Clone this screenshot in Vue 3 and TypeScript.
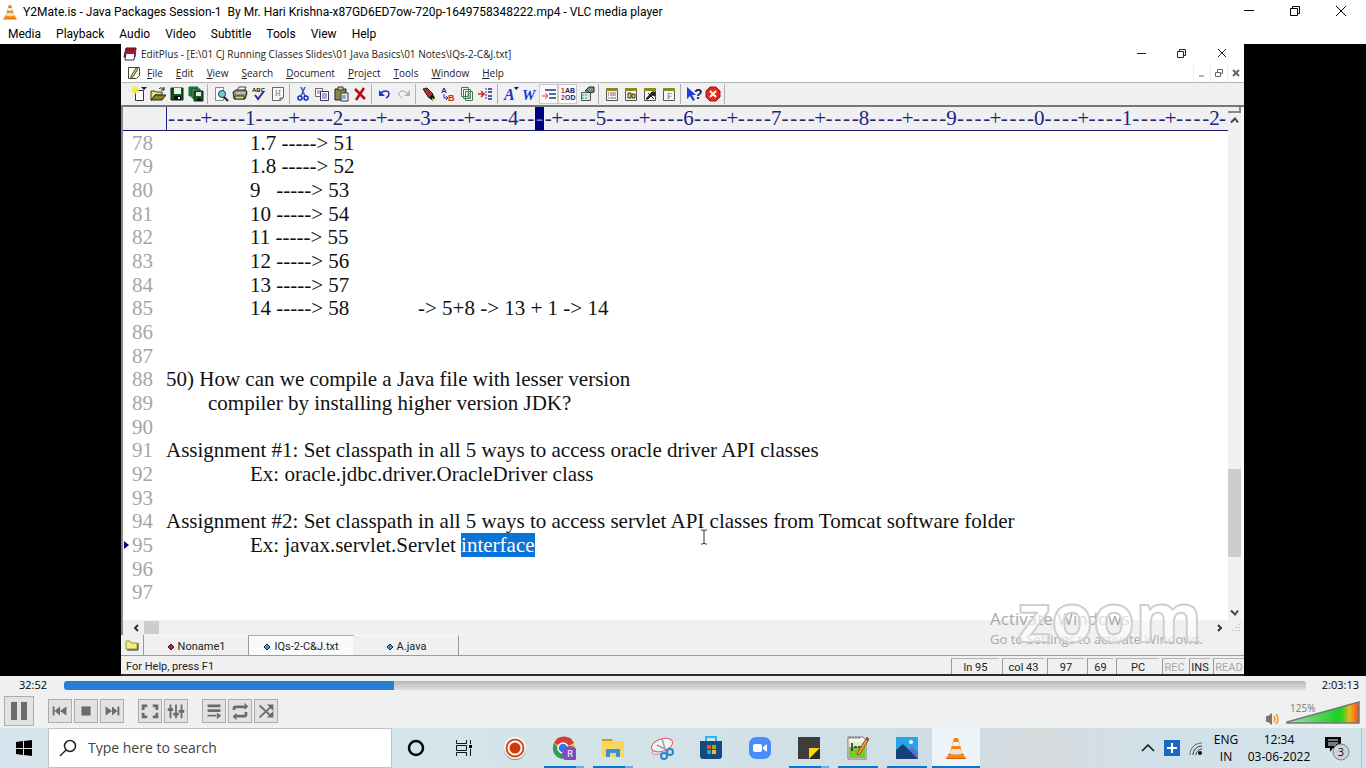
<script setup lang="ts">
interface Line { n: number; text: string; selected?: string; current?: boolean }
interface Task { name: string; body: string; state?: 'run' | 'multi' | 'active' }

const playerMenu: string[] = ['Media', 'Playback', 'Audio', 'Video', 'Subtitle', 'Tools', 'View', 'Help']
const editorMenu: string[] = ['File', 'Edit', 'View', 'Search', 'Document', 'Project', 'Tools', 'Window', 'Help']

const lines: Line[] = [
  { n: 78, text: '\t\t1.7 -----> 51' },
  { n: 79, text: '\t\t1.8 -----> 52' },
  { n: 80, text: '\t\t9   -----> 53' },
  { n: 81, text: '\t\t10 -----> 54' },
  { n: 82, text: '\t\t11 -----> 55' },
  { n: 83, text: '\t\t12 -----> 56' },
  { n: 84, text: '\t\t13 -----> 57' },
  { n: 85, text: '\t\t14 -----> 58\t\t-> 5+8 -> 13 + 1 -> 14' },
  { n: 86, text: '' },
  { n: 87, text: '' },
  { n: 88, text: '50) How can we compile a Java file with lesser version' },
  { n: 89, text: '\tcompiler by installing higher version JDK?' },
  { n: 90, text: '' },
  { n: 91, text: 'Assignment #1: Set classpath in all 5 ways to access oracle driver API classes' },
  { n: 92, text: '\t\tEx: oracle.jdbc.driver.OracleDriver class' },
  { n: 93, text: '' },
  { n: 94, text: 'Assignment #2: Set classpath in all 5 ways to access servlet API classes from Tomcat software folder' },
  { n: 95, text: '\t\tEx: javax.servlet.Servlet ', selected: 'interface', current: true },
  { n: 96, text: '' },
  { n: 97, text: '' },
]

const caretColumn = 42
const ruler: string[] = Array.from({ length: 120 }, (_, i) => {
  if (i % 10 === 9) return String(((i + 1) / 10) % 10)
  return i % 10 === 4 ? '+' : '-'
})

const sheet = '<path d="M2.5 2.5h11v12h-11z" fill="#f4f4f4" stroke="#555"/><path d="M2 2h12v3H2z" fill="#8a8a20"/>'
const toolGroups: { name: string; body: string; on?: boolean }[][] = [
  [
    { name: 'New', body: '<path d="M4.500 4.500h8v10h-8z" fill="#fff" stroke="#333"/><path d="M4 0v8M0 4h8M1 1l6 6M7 1L1 7" stroke="#f5ee3a" stroke-width="1.500"/><path d="M10 1h6l-3 3z" fill="#111a60"/>' },
    { name: 'Open', body: '<path d="M1 5h4l1 1h6v3H5l-3 5H1z" fill="#e9e070" stroke="#333"/><path d="M5 9h11l-4 5H1z" fill="#8a8420" stroke="#222"/><path d="M9 3c2-2 4-1 5 1M14 1v3h-3" fill="none" stroke="#111"/>' },
    { name: 'Save', body: '<path d="M2 2h12v12H2z" fill="#0c5c18" stroke="#062b0a"/><path d="M5 2h7v6H5z" fill="#eef5ee"/><path d="M5 10h7v4H5z" fill="#111"/><path d="M9 11h2v2H9z" fill="#fff"/>' },
    { name: 'Save all', body: '<path d="M1 1h9v9H1z" fill="#1d7b2b" stroke="#174"/><path d="M4 3h8v9H4z" fill="#58a963" stroke="#153"/><path d="M6 5h9v10H6z" fill="#14611f" stroke="#052b0a"/><path d="M8 6h5v4H8z" fill="#dfe9df"/><path d="M9 12h4v3H9z" fill="#111"/>' },
  ],
  [
    { name: 'Print preview', body: '<path d="M2.500 1.500h8v13h-8z" fill="#fff" stroke="#888"/><circle cx="9" cy="8" r="3.500" fill="#73cbdc" stroke="#236"/><path d="M11 11l4 4" stroke="#123" stroke-width="2"/>' },
    { name: 'Print', body: '<path d="M5 5l2-4h7l-2 4" fill="#fff" stroke="#444"/><path d="M1 6l3-2h10l1 3-2 6H2z" fill="#8c9270" stroke="#222"/><path d="M3 10h9v3H3z" fill="#d8dc60" stroke="#333"/><path d="M4 7h9" stroke="#efefe0"/>' },
    { name: 'Spelling', body: '<text x="1" y="6" font-size="6" font-weight="700" font-family="Liberation Sans" fill="#111">ABC</text><path d="M4 9l3 4 6-8" fill="none" stroke="#2b2b90" stroke-width="2"/>' },
    { name: 'HTML', body: '<path d="M2.500 1.500h11v10l-3 3h-8z" fill="#f8f8f8" stroke="#666"/><path d="M13 12h-3v3" fill="none" stroke="#555"/><text x="5" y="10" font-size="8" font-family="Liberation Serif" fill="#777">H</text>' },
  ],
  [
    { name: 'Cut', body: '<path d="M6 1l4 9M10 1L6 10" stroke="#335ad2" stroke-width="1.500"/><circle cx="5" cy="12" r="2" fill="none" stroke="#1727c8" stroke-width="1.500"/><circle cx="11" cy="12" r="2" fill="none" stroke="#1727c8" stroke-width="1.500"/>' },
    { name: 'Copy', body: '<path d="M1.500 2.500h7v8h-7z" fill="#fff" stroke="#667"/><path d="M3 5h4M3 7h4" stroke="#77a"/><path d="M6.500 5.500h8v9h-8z" fill="#fff" stroke="#336"/><path d="M8 8h5M8 10h5M8 12h5" stroke="#559"/>' },
    { name: 'Paste', body: '<path d="M2 3h11v11H2z" fill="#8a8540" stroke="#222"/><path d="M5 1h5v3H5z" fill="#d7d27a" stroke="#333"/><path d="M8 7h7v8H8z" fill="#e7f2ff" stroke="#334"/><path d="M9 10h4M9 12h4" stroke="#36a"/>' },
    { name: 'Delete', body: '<path d="M3 3l10 10M12 2L4 14" stroke="#b80d10" stroke-width="2.500"/>' },
  ],
  [
    { name: 'Undo', body: '<path d="M3 8c3-4 9-4 9 0 0 2-1 3-3 4" fill="none" stroke="#2036cf" stroke-width="1.500"/><path d="M2 4v6h6z" fill="#2036cf"/>' },
    { name: 'Redo', body: '<path d="M12 8c-3-4-9-4-9 0 0 2 1 3 3 4" fill="none" stroke="#aaa"/><path d="M14 4v6H8z" fill="#b4b4b4"/>' },
  ],
  [
    { name: 'Find', body: '<path d="M2 3l4-1 6 6-4 4z" fill="#b13126" stroke="#311"/><path d="M8 12l4-4 2 4-2 3z" fill="#1d1411"/><path d="M11 12l4 2-3 2z" fill="#f6e765"/>' },
    { name: 'Replace', body: '<text x="1" y="7" font-size="8" font-weight="700" font-family="Liberation Sans" fill="#28288c">A</text><text x="8" y="15" font-size="9" font-weight="700" font-family="Liberation Sans" fill="#d22">B</text><path d="M4 8v4h4M6 10l2 2-2 2" fill="none" stroke="#339"/>' },
    { name: 'Find in files', body: '<path d="M2.500 1.500h7v9h-7zM4.500 3.500h7v9h-7zM6.500 5.500h7v9h-7z" fill="#f8fbf8" stroke="#475"/><path d="M8 8h4M8 10h4M8 12h4" stroke="#686"/>' },
    { name: 'Go to line', body: '<path d="M0 8h5M3 5l3 3-3 3" fill="none" stroke="#d91f1f" stroke-width="1.500"/><path d="M8 2v12" stroke="#339" stroke-dasharray="2 1"/><path d="M10 3h4M10 6h4M10 10h4M10 13h4" stroke="#228" stroke-width="1.500"/>' },
  ],
  [
    { name: 'Font', body: '<text x="1" y="14" font-size="16" font-weight="700" font-style="italic" font-family="Liberation Serif" fill="#1d37c9">A</text><path d="M11 1h5l-3 3z" fill="#118"/>' },
    { name: 'Web font', body: '<text x="0" y="14" font-size="15" font-weight="700" font-style="italic" font-family="Liberation Serif" fill="#1d37e0">W</text>' },
    { name: 'Word wrap', on: true, body: '<path d="M4 4h11M8 8h7M8 12h7" stroke="#22328e" stroke-width="1.500"/><path d="M1 10h5M4 7l3 3-3 3" fill="none" stroke="#ed2b2b"/>' },
    { name: 'Line numbers', on: true, body: '<text x="1" y="7" font-size="7" font-weight="700" font-family="Liberation Sans" fill="#d22">1</text><text x="5" y="7" font-size="7" font-weight="700" font-family="Liberation Sans" fill="#227">AB</text><text x="1" y="14" font-size="7" font-weight="700" font-family="Liberation Sans" fill="#d22">2</text><text x="5" y="14" font-size="7" font-weight="700" font-family="Liberation Sans" fill="#227">OD</text>' },
    { name: 'Preferences', body: '<path d="M2.500 6.500h9v8h-9z" fill="#cdf2dc" stroke="#555"/><path d="M3 9h6M3 12h6" stroke="#3a8" stroke-dasharray="2 1"/><path d="M6 5l4-4h5v5l-4 1-2-2z" fill="#7b9580" stroke="#222"/>' },
  ],
  [
    { name: 'Cliptext', body: sheet + '<path d="M4 7h1M4 9h1M4 12h1" stroke="#c33"/><path d="M6 7h6M6 9h6M6 12h6" stroke="#777"/>' },
    { name: 'Directory', body: sheet + '<path d="M5 7h3v5H5zM9 8h3v4H9z" fill="#e3dc3b" stroke="#333"/>' },
    { name: 'Tools', body: sheet + '<path d="M4 13l6-7h3v4l-3-1-4 4zM6 7l6 6" fill="#222" stroke="#222"/>' },
    { name: 'Functions', body: sheet + '<text x="6" y="13" font-size="9" font-family="Liberation Serif" fill="#777">F</text>' },
  ],
  [
    { name: 'Context help', body: '<path d="M1 1v12l3-3 3 5 2-1-3-5h4z" fill="#1f3bd8"/><text x="8" y="13" font-size="14" font-weight="700" font-family="Liberation Sans" fill="#171d66">?</text>' },
    { name: 'Stop', body: '<path d="M5 1h6l4 4v6l-4 4H5l-4-4V5z" fill="#e8281e" stroke="#a11"/><path d="M5 5l6 6M11 5l-6 6" stroke="#fff" stroke-width="2"/>' },
  ],
]

const docTabs = [
  { name: 'Noname1', color: '#d32020' },
  { name: 'IQs-2-C&J.txt', color: '#2d9cf0', active: true },
  { name: 'A.java', color: '#2d9cf0' },
]
const statusCells = [
  { t: 'ln 95', c: 'w48' }, { t: 'col 43', c: 'w43' }, { t: '97', c: 'w38' }, { t: '69', c: 'w27' },
  { t: 'PC', c: 'w44' }, { t: 'REC', c: 'w24 dim' }, { t: 'INS', c: 'w22' }, { t: 'READ', c: 'w30 dim' },
]

const controlGroups: { name: string; body: string }[][] = [
  [
    { name: 'Previous', body: '<path d="M4 7h2v10H4zM12 7v10l-6-5zM19 7v10l-7-5z"/>' },
    { name: 'Stop', body: '<path d="M7 7h10v10H7z"/>' },
    { name: 'Next', body: '<path d="M18 7h2v10h-2zM12 7v10l6-5zM5 7v10l7-5z"/>' },
  ],
  [
    { name: 'Fullscreen', body: '<path d="M3 5h6v3H6v3H3zM15 5h6v6h-3V8h-3zM3 14h3v3h3v3H3zM18 14h3v6h-6v-3h3z"/>' },
    { name: 'Extended settings', body: '<path d="M5 5h2v4h2v3H7v8H5v-8H3V9h2zM11 5h2v9h2v3h-2v3h-2v-3H9v-3h2zM17 5h2v6h2v3h-2v6h-2v-6h-2v-3h2z"/>' },
  ],
  [
    { name: 'Playlist', body: '<path d="M5 5h14v3H5zM5 10h14v3H5zM5 16h9v2H5zM15 14l5 3-5 4z"/>' },
    { name: 'Loop', body: '<path d="M4 11V9q0-3 3-3h10V3l4 4-4 4V9H7v2zM20 13v3q0 3-3 3H8v3l-4-4 4-4v2h9v-3z"/>' },
    { name: 'Random', body: '<path d="M5 6l13 12M5 19L18 7" fill="none" stroke="#6b6b6b" stroke-width="2"/><path d="M13 5h7v7zM13 19h7v-7z"/>' },
  ],
]

const cone = '<path d="M10 2h4l4 14H6z" fill="#f5820f"/><path d="M9 6h6l1 4H8z" fill="#eee"/><path d="M7 13h10l1 4q-6 3-12 0z" fill="#e4e4e4"/><path d="M5 17q7 3 14 0l3 6H2z" fill="#f58a16"/><path d="M2 22h20v1H2z" fill="#c95f05"/>'

const tasks: Task[] = [
  { name: 'Screen recorder', body: '<circle cx="12" cy="13" r="11" fill="#8c8480"/><circle cx="12" cy="12" r="11" fill="#fff"/><circle cx="12" cy="12" r="8.500" fill="#fff" stroke="#d8481c" stroke-width="2"/><circle cx="12" cy="12" r="5.500" fill="#cf3b0c"/>' },
  { name: 'Google Chrome', state: 'multi', body: '<circle cx="12" cy="12" r="11" fill="#f7c52d"/><path d="M12 12L2 7A11 11 0 0 1 22 7z" fill="#dc3b30"/><path d="M2 7a11 11 0 0 0 9 16l4-8-6-1z" fill="#2f9e4f"/><circle cx="11" cy="12" r="5" fill="#2f76e8" stroke="#fff" stroke-width="1.500"/><circle cx="18" cy="18" r="8" fill="#7b4fbf"/><text x="18" y="21" text-anchor="middle" font-size="9" font-family="Roboto" fill="#fff">R</text>' },
  { name: 'File Explorer', state: 'multi', body: '<path d="M1 3h10l1 3H1z" fill="#d99a0b"/><path d="M1 5h22v16H1z" fill="#fbd562"/><path d="M5 14q0-1 1-1h12q1 0 1 1v7h-4v-4H9v4H5z" fill="#3891d8"/>' },
  { name: 'Snipping Tool', body: '<g fill="none"><ellipse cx="12" cy="9" rx="11" ry="6" transform="rotate(-18 12 9)" fill="#f4f4f6" stroke="#ec5b5b"/><path d="M3 15c-3 4 2 5 8 2" stroke="#ec7b7b"/><path d="M12 3l4 13M7 9l10 5" stroke="#9aa0a8" stroke-width="1.500"/><circle cx="14" cy="20" r="3" stroke="#2b86c8" stroke-width="2"/><circle cx="20" cy="16" r="3" stroke="#2b86c8" stroke-width="2"/></g>' },
  { name: 'Microsoft Store', body: '<path d="M7 6V1h10v5" fill="none" stroke="#2bb5ef" stroke-width="2"/><path d="M1 5h22v15q0 3-3 3H4q-3 0-3-3z" fill="#17497f"/><path d="M8 9h4v4H8z" fill="#f05023"/><path d="M13 9h4v4h-4z" fill="#7fba1c"/><path d="M8 14h4v4H8z" fill="#1fa5ee"/><path d="M13 14h4v4h-4z" fill="#fdb913"/>' },
  { name: 'Zoom', body: '<rect x="1" y="1" width="22" height="22" rx="7" fill="#4a8cf8"/><rect x="5" y="8" width="9" height="8" rx="2" fill="#fff"/><path d="M15 11l4-3v8l-4-3z" fill="#fff"/>' },
  { name: 'Sticky Notes', state: 'multi', body: '<path d="M1 1h22v11L12 23H1z" fill="#3d3d3d"/><path d="M12 12h11L12 23z" fill="#fbd800"/><path d="M23 12v11H12z" fill="#2b2b2b"/>' },
  { name: 'EditPlus', state: 'run', body: '<path d="M2 1h15l3 3v19H2z" fill="#f7f7f2" stroke="#777"/><path d="M3 10h16v12H3z" fill="#7cc829"/><path d="M3 6h16v5H3z" fill="#dff0b8"/><path d="M4 1v2M7 1v2M10 1v2M13 1v2" stroke="#555"/><path d="M6 7v8M8 11h3M12 11h3" stroke="#223" stroke-width="1.500"/><path d="M21 1l2 2-9 15-3 1 1-3z" fill="#f1a22b" stroke="#8a5a1c"/><path d="M20 2l3 1-1 2-3-1z" fill="#b83a3a"/>' },
  { name: 'Photos', state: 'run', body: '<path d="M1 1h22v22H1z" fill="#2aa4e8"/><circle cx="16" cy="6" r="2" fill="#fff"/><path d="M14 13l3-2 6 6v6H14z" fill="#5f6fd0"/><path d="M1 14l7-6 15 15H1z" fill="#173f78"/>' },
  { name: 'VLC media player', state: 'active', body: cone },
]
</script>

<template>
  <div class="screen">
    <header class="title-bar">
      <svg class="cone" viewBox="0 0 24 24" v-html="cone" />
      <h1>Y2Mate.is - Java Packages Session-1&nbsp; By Mr. Hari Krishna-x87GD6ED7ow-720p-1649758348222.mp4 - VLC media player</h1>
      <div class="win-buttons">
        <button aria-label="Minimize"><svg viewBox="0 0 12 12"><path d="M1 5.500h10" /></svg></button>
        <button aria-label="Restore"><svg viewBox="0 0 12 12"><path d="M1.500 3.500h7v7h-7zM3.500 3V1.500h7v7H9" /></svg></button>
        <button aria-label="Close"><svg viewBox="0 0 12 12"><path d="M1 1l10 10M11 1L1 11" /></svg></button>
      </div>
    </header>
    <nav class="player-menu">
      <button v-for="m in playerMenu" :key="m">{{ m }}</button>
    </nav>

    <main class="video">
      <section class="editplus">
        <div class="ep-title">
          <svg class="ep-logo" viewBox="0 0 14 14"><path d="M3 1h10l-1 9H1z" fill="#b3203a" stroke="#40101a" /><path d="M3 6h9l-1 7H2z" fill="#fff" stroke="#333" /><path d="M3 2h10v5H2z" fill="#a81a34" /><path d="M4 3h7" stroke="#311" stroke-dasharray="1 1" /></svg>
          <h2>EditPlus - [E:\01 CJ Running Classes Slides\01 Java Basics\01 Notes\IQs-2-C&amp;J.txt]</h2>
          <div class="ep-buttons">
            <button aria-label="Minimize"><svg viewBox="0 0 12 12"><path d="M1 5.500h9" /></svg></button>
            <button aria-label="Restore"><svg viewBox="0 0 12 12"><path d="M1.500 3.500h6v6h-6zM3.500 3V1.500h6v6H8" /></svg></button>
            <button aria-label="Close"><svg viewBox="0 0 12 12"><path d="M2 1l8 8M10 1l-8 8" /></svg></button>
          </div>
        </div>
        <nav class="ep-menu">
          <svg class="ep-doc" viewBox="0 0 14 14"><path d="M1.500 1.500h11v8l-3 3h-8z" fill="#fff" stroke="#444" /><path d="M9 2l2 1-5 8-2 1v-2z" fill="#d9c73c" stroke="#554" /></svg>
          <button v-for="m in editorMenu" :key="m"><u>{{ m[0] }}</u>{{ m.slice(1) }}</button>
          <div class="mdi">
            <button aria-label="Minimize document"><svg viewBox="0 0 10 10"><path d="M2 8h5" /></svg></button>
            <button aria-label="Restore document"><svg viewBox="0 0 10 10"><path d="M1.500 4.500h5v4h-5zM3.500 4V1.500h5v4H7" /></svg></button>
            <button aria-label="Close document"><svg viewBox="0 0 10 10"><path d="M2 2l6 6M8 2L2 8" stroke-width="2" /></svg></button>
          </div>
        </nav>
        <div class="toolbar">
          <div v-for="(g, i) in toolGroups" :key="i" class="tool-group">
            <button v-for="t in g" :key="t.name" :aria-label="t.name" :class="{ on: t.on }">
              <svg viewBox="0 0 16 16" v-html="t.body" />
            </button>
          </div>
        </div>
        <div class="edit-area">
          <div class="pane">
            <div class="ruler">
              <div class="scale">
                <span v-for="(c, i) in ruler" :key="i" :class="{ caret: i === caretColumn }">{{ c }}</span>
              </div>
              <span class="tail">-</span>
            </div>
            <div class="text">
              <div v-for="l in lines" :key="l.n" class="line" :class="{ current: l.current }">
                <span class="num">{{ l.n }}</span>
                <span class="code">{{ l.text }}<mark v-if="l.selected">{{ l.selected }}</mark></span>
              </div>
            </div>
          </div>
          <div class="v-scroll">
            <i class="splitter" />
            <svg viewBox="0 0 13 12"><path d="M3 8l4-4 3 4" /></svg>
            <div class="v-track"><i class="v-thumb" /></div>
            <svg viewBox="0 0 13 12"><path d="M3 4l4 4 3-4" /></svg>
          </div>
          <svg class="ibeam" viewBox="0 0 8 16"><path d="M1 1h2l1 1 1-1h2M4 2v12M1 15h2l1-1 1 1h2" /></svg>
        </div>
        <div class="h-scroll">
          <svg viewBox="0 0 12 12"><path d="M8 3L5 6l3 3" /></svg>
          <i class="h-thumb" />
          <svg class="right" viewBox="0 0 12 12"><path d="M5 3l3 3-3 3" /></svg>
          <svg class="grip" viewBox="0 0 10 10"><path d="M8 1v9M5 4v6M2 7v3" /></svg>
        </div>
        <div class="doc-tabs">
          <button class="folder" aria-label="Folders"><svg viewBox="0 0 14 12"><path d="M1 10V2h4l1 2h6v6z" fill="#f4ec7c" stroke="#a39a2c" /><path d="M2 11h11V4" fill="none" stroke="#222" /></svg></button>
          <button v-for="t in docTabs" :key="t.name" class="doc-tab" :class="{ active: t.active }">
            <svg viewBox="0 0 8 8"><path d="M4 1l3 3-3 3-3-3z" :fill="t.color" stroke="#223" /></svg>{{ t.name }}
          </button>
        </div>
        <div class="status">
          <span class="help">For Help, press F1</span>
          <span v-for="s in statusCells" :key="s.t" class="cell" :class="s.c">{{ s.t }}</span>
        </div>
        <div class="activate">
          <p class="big">Activate Windows</p>
          <p>Go to Settings to activate Windows.</p>
        </div>
        <div class="zoom-mark">zoom</div>
      </section>
    </main>

    <section class="seek">
      <span class="elapsed">32:52</span>
      <input type="range" min="0" max="7393" value="1972" aria-label="Position">
      <span>2:03:13</span>
    </section>
    <section class="controls">
      <button class="pause" aria-label="Pause"><svg viewBox="0 0 28 28"><path d="M6 5h6v18H6zM16 5h6v18h-6z" /></svg></button>
      <div v-for="(g, i) in controlGroups" :key="i" class="group">
        <button v-for="c in g" :key="c.name" :aria-label="c.name"><svg viewBox="0 0 24 24" v-html="c.body" /></button>
      </div>
      <button class="mute" aria-label="Mute"><svg viewBox="0 0 16 14"><path d="M1 4h2l4-3v12l-4-3H1z" fill="#777" /><path d="M9 4q2 3 0 6M11 2q4 5 0 10" fill="none" stroke="#f59a25" stroke-width="1.500" /></svg></button>
      <label class="volume">
        <span>125%</span>
        <svg viewBox="0 0 74 24">
          <defs><linearGradient id="vol"><stop offset="0" stop-color="#a6dca6" /><stop offset=".7" stop-color="#1ecf28" /><stop offset=".77" stop-color="#35d022" /><stop offset=".87" stop-color="#f5b515" /><stop offset="1" stop-color="#f1471c" /></linearGradient></defs>
          <path d="M1 21L73 1v21H1z" fill="url(#vol)" stroke="#777" stroke-width="1.500" />
        </svg>
        <input type="range" min="0" max="125" value="125" aria-label="Volume">
      </label>
    </section>

    <footer class="taskbar">
      <button class="start" aria-label="Start"><svg viewBox="0 0 16 16"><path d="M0 2l7-1v7H0zM8 1l8-1v8H8zM0 9h7v6l-7-1zM8 9h8v7l-8-1z" /></svg></button>
      <label class="search">
        <svg viewBox="0 0 18 18"><circle cx="11" cy="7" r="5.500" /><path d="M7 11l-6 6" /></svg>
        <input type="text" placeholder="Type here to search" aria-label="Search">
      </label>
      <button class="sys" aria-label="Cortana"><svg viewBox="0 0 24 24"><circle cx="12" cy="12" r="7" fill="none" stroke="#080808" stroke-width="2.500" /></svg></button>
      <button class="sys last" aria-label="Task view"><svg viewBox="0 0 24 24"><path d="M4.500 4v3.500h10V4M4.500 20v-3.500h10V20M4.500 9.500h10v5h-10zM18.500 4v4M18.500 13v7" fill="none" stroke="#111" /><path d="M17 9h3v3h-3z" /></svg></button>
      <button v-for="t in tasks" :key="t.name" class="task" :class="t.state" :aria-label="t.name">
        <svg viewBox="0 0 24 24" v-html="t.body" />
      </button>
      <div class="tray">
        <button aria-label="Hidden icons"><svg class="s16" viewBox="0 0 16 16"><path d="M2 11l6-6 6 6" fill="none" stroke="#111" stroke-width="1.500" /></svg></button>
        <button aria-label="Security"><svg class="s16" viewBox="0 0 16 16"><path d="M0 0h16v16H0z" fill="#1b68be" /><path d="M8 3v10M3 8h10" stroke="#fff" stroke-width="2" /></svg></button>
        <button aria-label="Network"><svg class="s16" viewBox="0 0 16 16"><g fill="none" stroke="#666"><path d="M2 15C2 8 7 3 14 3" /><path d="M5 15c0-5 4-9 9-9M8 15c0-3 3-6 6-6" stroke="#333" /></g><circle cx="12" cy="13" r="2" fill="#111" /></svg></button>
        <button class="lang">ENG<br>IN</button>
        <button class="clock">12:34<br>03-06-2022</button>
        <button class="notes" aria-label="3 notifications">
          <svg viewBox="0 0 26 26"><path d="M1 2h16v11h-8l-3 4v-4H1z" fill="#080808" /><path d="M4 5h10M4 8h10M4 10h8" stroke="#e8eef2" /><circle cx="17" cy="17" r="8" fill="#cdd3d6" stroke="#7c8285" /><text x="17" y="21" text-anchor="middle" font-size="11" font-family="Open Sans" fill="#111">3</text></svg>
        </button>
      </div>
    </footer>
  </div>
</template>

<style>
body { margin: 0; }
</style>

<style scoped>
* { box-sizing: border-box; }
button { background: none; border: 0; padding: 0; margin: 0; font: inherit; color: inherit; display: flex; align-items: center; justify-content: center; white-space: nowrap; }
h1, h2, p { margin: 0; font-weight: 400; font-size: inherit; white-space: nowrap; }
svg { display: block; flex: none; }
.screen { height: 100vh; min-height: 600px; display: flex; flex-direction: column; overflow: hidden; background: #fff; font-family: "Open Sans", "Noto Sans", sans-serif; font-size: 12px; line-height: 16px; color: #000; }

.title-bar { height: 22px; display: flex; align-items: center; padding: 1px 2px 0; gap: 5px; }
.title-bar, .player-menu { font-family: Roboto, "Open Sans", sans-serif; }
.title-bar .cone { width: 16px; height: 16px; }
.win-buttons { margin-left: auto; display: flex; height: 100%; }
.win-buttons button { width: 46px; padding-bottom: 2px; }
.win-buttons svg { width: 12px; height: 12px; fill: none; stroke: #000; }
.player-menu { height: 22px; display: flex; align-items: center; gap: 15px; padding: 2px 8px 0; }

.video { flex: 1; min-height: 0; background: #000; padding: 0 122px 0 121px; display: flex; }
.editplus { position: relative; flex: 1; min-width: 0; display: flex; flex-direction: column; background: #f0f0f0; border-bottom: 2px solid #2d2a2e; font-family: Roboto, sans-serif; font-size: 11px; color: #222; overflow: hidden; }
.ep-title, .ep-menu { font-family: "Open Sans", sans-serif; font-size: 10px; }
.ep-title { height: 20px; background: #fff; display: flex; align-items: center; gap: 4px; padding-left: 2px; }
.ep-logo { width: 14px; height: 14px; }
.ep-buttons { margin-left: auto; display: flex; padding-right: 2px; }
.ep-buttons button { width: 40px; }
.ep-buttons svg { width: 12px; height: 12px; fill: none; stroke: #222; }
.ep-menu { height: 19px; background: #fff; border-bottom: 1px solid #b5b5b5; display: flex; align-items: center; padding-left: 6px; gap: 13px; }
.ep-doc { width: 14px; height: 14px; margin-right: -7px; }
.mdi { margin-left: auto; display: flex; align-self: stretch; }
.mdi button { width: 17px; border-left: 1px solid #eee; }
.mdi svg { width: 10px; height: 10px; fill: none; stroke: #666; }
.toolbar { height: 22px; display: flex; align-items: center; padding-left: 8px; }
.tool-group { display: flex; height: 20px; padding-right: 2px; margin-right: 3px; border-right: 1px solid #b0b0b0; }
.tool-group button { width: 19px; height: 20px; }
.tool-group button.on { background: #fafafa; border: 1px solid #c9c9c9; }
.tool-group svg { width: 16px; height: 16px; }

.edit-area { position: relative; flex: 1; min-height: 0; display: flex; background: #fff; border-left: 2px solid #888; border-top: 2px solid #777; }
.pane { flex: 1; min-width: 0; display: flex; flex-direction: column; font-family: "Liberation Serif", serif; font-size: 21px; }
.ruler { height: 24px; flex: none; display: flex; background: #f0f0f0; border-bottom: 1px solid #16166e; padding-left: 43px; line-height: 22px; color: #23237f; }
.scale { flex: 1; border-left: 1px solid #23237f; display: grid; grid-template-columns: repeat(120, 1fr); }
.scale span { min-width: 0; display: flex; justify-content: center; }
.scale .caret { background: #000080; color: #8080d0; }
.tail { width: 9px; }
.text { flex: 1; min-height: 0; display: flex; flex-direction: column; padding-bottom: 16px; overflow: hidden; }
.line { flex: 1; min-height: 0; display: flex; align-items: center; line-height: 24px; position: relative; }
.num { width: 43px; padding-left: 9px; color: #a5a5a5; }
.code { white-space: pre; tab-size: 8; color: #111; }
.code mark { background: #0874d8; color: #fff; display: inline-block; }
.current::before { content: ""; position: absolute; left: 1px; top: 8px; border: 4px solid transparent; border-left: 5px solid #000080; border-right: 0; }
.v-scroll { width: 16px; display: flex; flex-direction: column; background: #f0f0f0; border-right: 3px solid #fafafa; }
.splitter { height: 6px; border: 2px solid #888; border-top: 0; border-left: 0; background: #f0f0f0; }
.v-scroll svg { width: 13px; height: 15px; fill: none; stroke: #444; stroke-width: 2; }
.v-track { flex: 1; display: flex; flex-direction: column; justify-content: flex-end; padding-bottom: 48px; }
.v-thumb { height: 88px; background: #cdcdcd; }
.ibeam { position: absolute; left: 577px; top: 422px; width: 8px; height: 16px; fill: none; stroke: #333; }
.h-scroll { height: 15px; display: flex; align-items: center; padding-left: 7px; border-left: 2px solid #888; }
.h-scroll svg { width: 12px; height: 12px; fill: none; stroke: #333; stroke-width: 2; }
.h-thumb { width: 15px; height: 13px; margin-left: 2px; background: #cdcdcd; }
.h-scroll .right { margin-left: auto; }
.h-scroll .grip { width: 10px; height: 10px; margin: 0 3px 0 6px; stroke: #aaa; stroke-width: 1; stroke-dasharray: 1 2; }
.doc-tabs { height: 21px; display: flex; border-bottom: 1px solid #9c9c9c; }
.folder { width: 23px; border-right: 1px solid #999; }
.folder svg { width: 14px; height: 12px; }
.doc-tab { width: 105px; gap: 3px; border-right: 1px solid #999; border-top: 1px solid #f8f8f8; padding-top: 2px; }
.doc-tab.active { background: #fafafa; border-top-color: #aaa; border-right-color: #f0f0f0; }
.doc-tab svg { width: 8px; height: 8px; }
.status { height: 18px; display: flex; align-items: flex-end; gap: 3px; padding-left: 5px; }
.help { margin-right: auto; height: 16px; line-height: 18px; }
.cell { height: 16px; text-align: center; border-left: 1px solid #999; border-top: 1px solid #b5b5b5; line-height: 17px; }
.w48 { width: 48px; } .w43 { width: 42px; } .w38 { width: 37px; } .w27 { width: 26px; } .w44 { width: 43px; } .w24 { width: 24px; } .w22 { width: 21px; } .w30 { width: 31px; }
.dim { color: #a8a8a8; }
.activate { position: absolute; right: 46px; bottom: 26px; width: 208px; color: #a9a9a9; font-family: "Open Sans", sans-serif; font-size: 13px; line-height: 18px; }
.activate .big { font-size: 17px; line-height: 22px; }
.zoom-mark { position: absolute; right: 42px; bottom: 30px; font-family: "Open Sans", sans-serif; font-weight: 700; font-size: 68px; line-height: 56px; color: rgba(255, 255, 255, .6); -webkit-text-stroke: 2px #cfcfcf; }

.seek { height: 18px; display: flex; align-items: center; background: #f0f0f0; padding: 0 7px 0 19px; gap: 16px; font-size: 11px; }
.seek .elapsed { width: 29px; }
.seek input { flex: 1; min-width: 0; height: 9px; margin: 0; appearance: none; border-radius: 3px; background: linear-gradient(90deg, #267fd4 26.6%, transparent 26.6%), linear-gradient(#b8b8b8, #dedede); }
.seek input::-webkit-slider-thumb { appearance: none; width: 1px; height: 9px; }
.controls { height: 34px; display: flex; align-items: center; padding: 0 6px 0 4px; gap: 14px; background: #f0f0f0; }
.controls .pause { width: 30px; height: 30px; }
.controls .pause svg { width: 28px; height: 28px; }
.group { display: flex; gap: 2px; }
.group button { width: 24px; height: 24px; }
.group svg { width: 22px; height: 22px; }
.controls .pause, .group button { background: #e2e2e2; border: 1px solid #adadad; fill: #6b6b6b; }
.mute { margin: 16px -9px 0 auto; }
.mute svg { width: 16px; height: 14px; }
.volume { position: relative; width: 74px; height: 26px; }
.volume svg { width: 74px; height: 24px; margin-top: 3px; }
.volume span { position: absolute; left: 4px; top: 2px; font-size: 10px; color: #777; }
.volume input { position: absolute; inset: 0; width: 100%; margin: 0; opacity: 0; }

.taskbar { height: 40px; display: flex; background: linear-gradient(90deg, #d7e6ee, #d3e4e9 45%, #d0dde6 70%, #d7dbde 76%, #d0e0e8 84%, #d5e4eb); }
.start { width: 48px; }
.start svg { width: 16px; height: 16px; }
.search { width: 344px; background: #fff; border: 1px solid #c0c4c6; display: flex; align-items: center; padding-left: 10px; gap: 11px; }
.search svg { width: 18px; height: 18px; fill: none; stroke: #222; stroke-width: 1.5; }
.search input { flex: 1; min-width: 0; border: 0; padding: 0; outline: 0; font: inherit; font-size: 14px; background: none; }
.search input::placeholder { color: #444; opacity: 1; }
.sys { width: 48px; }
.sys.last { margin-right: 3px; }
.sys svg, .task svg { width: 24px; height: 24px; }
.task { width: 48px; margin-right: 1px; padding-top: 2px; border-bottom: 2px solid transparent; background-repeat: no-repeat; background-position: 4px 100%; background-origin: border-box; background-clip: border-box; background-size: 40px 2px; }
.task.run { background-image: linear-gradient(#0078d7, #0078d7); }
.task.multi { background-image: linear-gradient(90deg, #0078d7 80%, #66afe6 80%); }
.task.active { background-color: #edf3f6; border-bottom-color: #0078d7; }
.tray { margin-left: auto; display: flex; align-items: stretch; border-right: 1px solid #b4c2c9; margin-right: 4px; padding-right: 3px; }
.tray > button { margin-right: 8px; }
.s16 { width: 16px; height: 16px; }
.lang, .clock { line-height: 17px; text-align: center; }
.lang { width: 28px; }
.tray .clock { width: 62px; margin-right: 14px; }
.tray .notes { margin-right: 8px; }
.notes svg { width: 26px; height: 26px; }
</style>
